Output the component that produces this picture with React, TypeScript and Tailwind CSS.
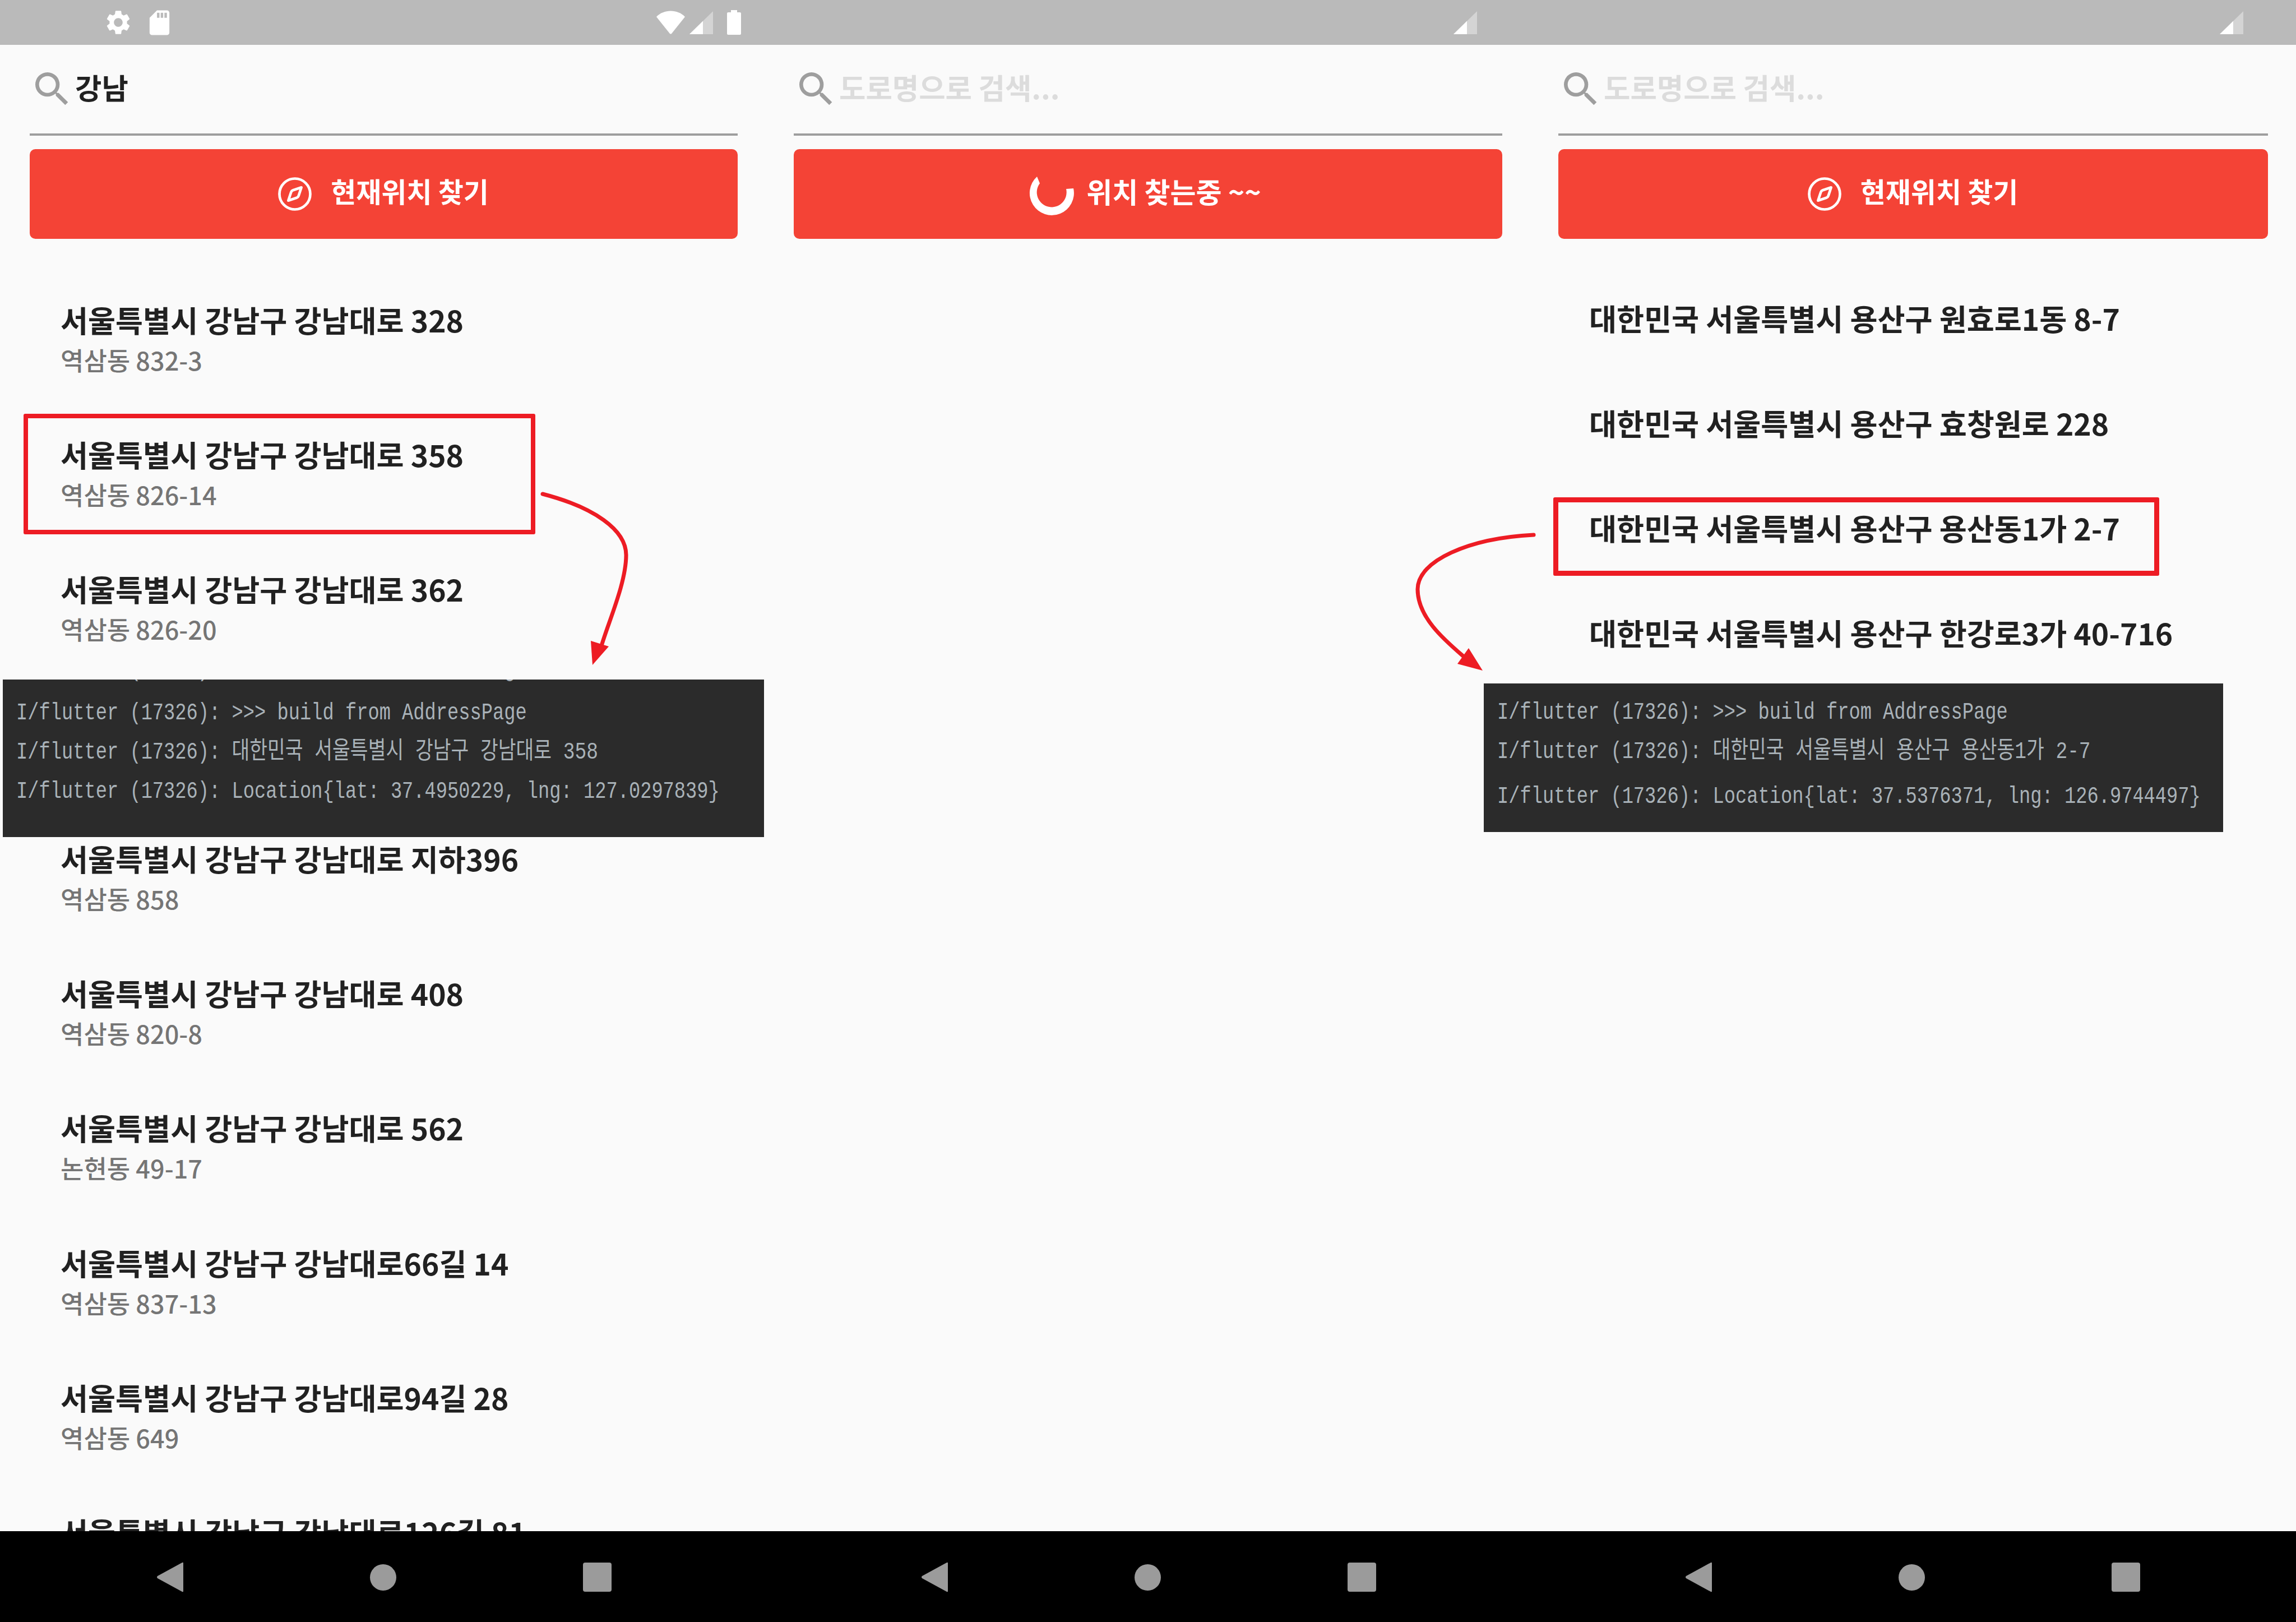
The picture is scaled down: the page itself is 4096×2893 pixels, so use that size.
import React from "react";
import { Compass } from "lucide-react";
import { MdSearch, MdSettings, MdSdStorage } from "react-icons/md";

const gangnam = [
  { title: "서울특별시 강남구 강남대로 328", sub: "역삼동 832-3" },
  { title: "서울특별시 강남구 강남대로 358", sub: "역삼동 826-14" },
  { title: "서울특별시 강남구 강남대로 362", sub: "역삼동 826-20" },
  { title: "", sub: "" }, // under the console overlay
  { title: "서울특별시 강남구 강남대로 지하396", sub: "역삼동 858" },
  { title: "서울특별시 강남구 강남대로 408", sub: "역삼동 820-8" },
  { title: "서울특별시 강남구 강남대로 562", sub: "논현동 49-17" },
  { title: "서울특별시 강남구 강남대로66길 14", sub: "역삼동 837-13" },
  { title: "서울특별시 강남구 강남대로94길 28", sub: "역삼동 649" },
  { title: "서울특별시 강남구 강남대로126길 81", sub: "" },
];

const yongsan = [
  "대한민국 서울특별시 용산구 원효로1동 8-7",
  "대한민국 서울특별시 용산구 효창원로 228",
  "대한민국 서울특별시 용산구 용산동1가 2-7",
  "대한민국 서울특별시 용산구 한강로3가 40-716",
];

const Signal = ({ split }: { split: number }) => (
  <svg width="42" height="41" viewBox="0 0 42 41">
    <path d="M42 0V41H0Z" fill="#d4d4d4" />
    <path d={`M${split} ${41 - split * 0.976}V41H0Z`} fill="#fff" />
  </svg>
);

const Wifi = () => (
  <svg width="53" height="42" viewBox="0 0 53 42">
    <path d="M1 11C14-3 39-3 52 11L28 41Q26.500 42 25 41Z" fill="#fff" />
  </svg>
);

const Battery = () => (
  <svg width="25" height="44" viewBox="0 0 25 44">
    <path d="M7 0H18V4H23Q25 4 25 6V42Q25 44 23 44H2Q0 44 0 42V6Q0 4 2 4H7Z" fill="#fff" />
  </svg>
);

const Spinner = () => (
  <svg width="80" height="80" viewBox="0 0 80 80">
    <path d="M14 9L19 21A26.500 26.500 0 1 0 66 31L79 30A39.500 39.500 0 1 1 14 9Z" fill="#fff" />
  </svg>
);

const NavBar = () => (
  <div className="flex h-[162px] shrink-0 items-center gap-[333px] bg-black pt-[2px] pl-[279px]">
    <svg width="48" height="54" viewBox="0 0 48 54">
      <path d="M48 2V52Q48 54 46 53L2 29Q0 27 2 25L46 1Q48 0 48 2Z" fill="#9b9b9b" />
    </svg>
    <div className="h-[47px] w-[47px] rounded-full bg-[#9b9b9b]" />
    <div className="h-[52px] w-[51px] rounded-[4px] bg-[#9b9b9b]" />
  </div>
);

const SearchRow = ({ value }: { value?: string }) => (
  <div className="flex h-[162px] items-center gap-[1px] border-b-[4px] border-[#9e9e9e]">
    <MdSearch size={80} className="text-[#9e9e9e]" />
    <span
      className={`-mt-[8px] text-[51.500px] leading-[64px] font-bold ${
        value ? "text-[#212121]" : "text-[#dcdcdc]"
      }`}
    >
      {value || "도로명으로 검색..."}
    </span>
  </div>
);

const LocateButton = ({ loading }: { loading?: boolean }) => (
  <div className="mt-[24px] flex h-[160px] items-center justify-center rounded-[10px] bg-[#f44336] text-white">
    {loading ? (
      <div className="mr-[10px] flex items-center gap-[22px]">
        <Spinner />
        <span className="-mt-[12px] text-[50px] leading-[64px] font-bold">위치 찾는중 ~~</span>
      </div>
    ) : (
      <div className="mr-[4px] flex items-center gap-[31px]">
        <Compass size={66} strokeWidth={1.7} />
        <span className="-mt-[12px] text-[49px] leading-[64px] font-bold">현재위치 찾기</span>
      </div>
    )}
  </div>
);

const Phone = ({
  children,
  status,
  className,
}: {
  children: React.ReactNode;
  status: React.ReactNode;
  className: string;
}) => (
  <div className="flex h-full min-h-0 min-w-0 flex-col bg-[#fafafa]">
    <div className="flex h-[80px] shrink-0 items-center bg-[#bababa]">{status}</div>
    <div className={`min-h-0 flex-1 overflow-hidden ${className}`}>{children}</div>
    <NavBar />
  </div>
);

const ConsoleLine = ({ children, className = "" }: { children: React.ReactNode; className?: string }) => (
  <div
    className={`h-[70px] origin-left scale-x-[0.803] whitespace-pre text-[42px] leading-[70px] text-[#a9b2b8] ${className}`}
  >
    {children}
  </div>
);

export default function App() {
  return (
    <div className="relative h-[2893px] w-[4096px] overflow-hidden font-['Noto_Sans_CJK_KR',sans-serif]">
      <div className="grid h-full grid-cols-[1364px_1363px_1369px] grid-rows-[2893px]">
        <Phone
          className="pr-[48px] pl-[53px]"
          status={
            <>
              <MdSettings size={52} className="ml-[185px] text-white" />
              <MdSdStorage size={53} className="ml-[21px] text-white" />
              <div className="mr-[42px] ml-auto flex items-center">
                <Wifi />
                <div className="ml-[7px]">
                  <Signal split={24} />
                </div>
                <div className="ml-[25px]">
                  <Battery />
                </div>
              </div>
            </>
          }
        >
          <SearchRow value="강남" />
          <LocateButton />
          <div className="mt-[60px]">
            {gangnam.map((item, i) => (
              <div key={i} className="flex h-[240.3px] flex-col justify-center pl-[55px]">
                <div className="text-[53.300px] leading-[72px] font-bold whitespace-nowrap text-[#212121]">
                  {item.title}
                </div>
                <div className="-mt-[1px] h-[74px] text-[45px] leading-[74px] font-medium text-[#757575]">
                  {item.sub}
                </div>
              </div>
            ))}
          </div>
        </Phone>

        <Phone
          className="pr-[47px] pl-[52px]"
          status={
            <div className="mr-[92px] ml-auto">
              <Signal split={24} />
            </div>
          }
        >
          <SearchRow />
          <LocateButton loading />
        </Phone>

        <Phone
          className="pr-[50px] pl-[53px]"
          status={
            <div className="mr-[94px] ml-auto">
              <Signal split={24} />
            </div>
          }
        >
          <SearchRow />
          <LocateButton />
          <div className="mt-[48px]">
            {yongsan.map((title) => (
              <div
                key={title}
                className="flex h-[186.800px] items-center pl-[55px] text-[53.300px] leading-[72px] font-bold whitespace-nowrap text-[#212121]"
              >
                {title}
              </div>
            ))}
          </div>
        </Phone>
      </div>

      {/* console captures pasted on top of the screens */}
      <div className="absolute top-[1212px] left-[5px] h-[281px] w-[1358px] overflow-hidden bg-[#2b2b2b] pl-[24px] font-['Liberation_Mono','Noto_Sans_CJK_KR',monospace]">
        <div className="mt-[-52px]">
          <ConsoleLine>{"I/flutter (17326): >>> build from AddressPage"}</ConsoleLine>
          <ConsoleLine className="mt-[7px]">{"I/flutter (17326): >>> build from AddressPage"}</ConsoleLine>
          <ConsoleLine>
            {"I/flutter (17326): "}
            <span className="text-[43px]">대한민국 서울특별시 강남구 강남대로 358</span>
          </ConsoleLine>
          <ConsoleLine>{"I/flutter (17326): Location{lat: 37.4950229, lng: 127.0297839}"}</ConsoleLine>
        </div>
      </div>
      <div className="absolute top-[1219px] left-[2647px] h-[265px] w-[1319px] overflow-hidden bg-[#2b2b2b] pl-[24px] font-['Liberation_Mono','Noto_Sans_CJK_KR',monospace]">
        <div className="mt-[17px]">
          <ConsoleLine>{"I/flutter (17326): >>> build from AddressPage"}</ConsoleLine>
          <ConsoleLine>
            {"I/flutter (17326): "}
            <span className="text-[43px]">대한민국 서울특별시 용산구 용산동1가 2-7</span>
          </ConsoleLine>
          <ConsoleLine className="mt-[10px]">
            {"I/flutter (17326): Location{lat: 37.5376371, lng: 126.9744497}"}
          </ConsoleLine>
        </div>
      </div>

      {/* red annotations */}
      <div className="absolute top-[738px] left-[42px] h-[215px] w-[913px] rounded-[3px] border-[8px] border-[#ed1c24]" />
      <div className="absolute top-[887px] left-[2771px] h-[140px] w-[1081px] rounded-[3px] border-[9px] border-[#ed1c24]" />
      <svg className="absolute inset-0" width="4096" height="2893" viewBox="0 0 4096 2893" fill="none">
        <path
          d="M968 881C1060 905 1117 945 1117 990C1117 1040 1085 1110 1072 1155"
          stroke="#ed1c24"
          strokeWidth="7"
          strokeLinecap="round"
        />
        <path d="M1057 1186L1054 1143L1086 1153Z" fill="#ed1c24" />
        <path
          d="M2736 954C2620 960 2529 1000 2529 1051C2529 1100 2575 1140 2610 1170"
          stroke="#ed1c24"
          strokeWidth="7"
          strokeLinecap="round"
        />
        <path d="M2645 1196L2620 1156L2600 1184Z" fill="#ed1c24" />
      </svg>
    </div>
  );
}
